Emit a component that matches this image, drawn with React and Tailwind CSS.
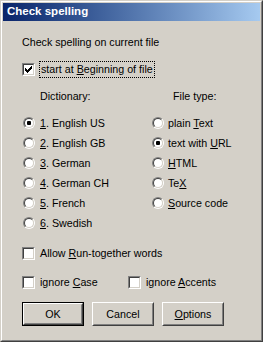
import React from 'react'

function Check({ checked }) {
  return (
    <span className="flex w-[13px] h-[13px] shrink-0 border border-t-[#808080] border-l-[#808080] border-b-white border-r-white">
      <span className="flex-1 flex items-center justify-center bg-white border border-t-[#404040] border-l-[#404040] border-b-[#D4D0C8] border-r-[#D4D0C8]">
        {checked ? (
          <svg width="7" height="7" viewBox="0 0 7 7" shapeRendering="crispEdges">
            <path d="M0 2h1v3h-1z M1 3h1v3h-1z M2 4h1v3h-1z M3 3h1v3h-1z M4 2h1v3h-1z M5 1h1v3h-1z M6 0h1v3h-1z" fill="#000" />
          </svg>
        ) : null}
      </span>
    </span>
  )
}

function Radio({ checked }) {
  return (
    <span className="flex w-3 h-3 shrink-0 rounded-full border border-t-[#808080] border-l-[#808080] border-b-white border-r-white">
      <span className="flex-1 flex items-center justify-center rounded-full bg-white border border-t-[#404040] border-l-[#404040] border-b-[#D4D0C8] border-r-[#D4D0C8]">
        {checked ? <span className="block w-1 h-1 rounded-[1px] bg-black" /> : null}
      </span>
    </span>
  )
}

function Key({ children }) {
  return <span className="underline underline-offset-[1px]">{children}</span>
}

function RadioRow({ checked, gap, children }) {
  return (
    <div className="h-5 flex items-center">
      <span className="ml-px">
        <Radio checked={checked} />
      </span>
      <span className={gap}>{children}</span>
    </div>
  )
}

function Button({ children, isDefault }) {
  return (
    <button type="button" className={`w-[62px] h-6 flex bg-[#D4D0C8] ${isDefault ? 'border border-black' : ''}`}>
      <span className="flex-1 flex border border-t-white border-l-white border-b-[#404040] border-r-[#404040]">
        <span className="flex-1 flex items-center justify-center border border-t-transparent border-l-transparent border-b-[#808080] border-r-[#808080]">
          <span>{children}</span>
        </span>
      </span>
    </button>
  )
}

export default function App() {
  return (
    <div className="w-[263px] h-[342px] bg-[#D4D0C8] border border-t-[#D4D0C8] border-l-[#D4D0C8] border-b-[#404040] border-r-[#404040] font-['Liberation_Sans',Arial,sans-serif] text-[10.7px] text-black leading-none">
      <div className="h-full flex flex-col p-px border border-t-white border-l-white border-b-[#808080] border-r-[#808080]">
        <div className="h-[18px] flex items-center pl-1 bg-gradient-to-r from-[#0A246A] to-[#A6CAF0] text-white font-bold text-[11.5px]">
          Check spelling
        </div>

        <div className="flex flex-col pl-[19px]">
          <div className="mt-[13px] h-4 flex items-center">Check spelling on current file</div>

          <div className="mt-[11px] h-[17px] flex items-center">
            <Check checked />
            <span className="ml-1 block border border-dotted border-black px-px leading-[15px]">
              start at <Key>B</Key>eginning of file
            </span>
          </div>

          <div className="mt-[10px] flex">
            <div className="w-[129px] flex flex-col">
              <div className="h-4 flex items-center pl-[18px]">Dictionary:</div>
              <div className="mt-[9px] flex flex-col">
                <RadioRow gap="ml-[5px]" checked><Key>1</Key>. English US</RadioRow>
                <RadioRow gap="ml-[5px]"><Key>2</Key>. English GB</RadioRow>
                <RadioRow gap="ml-[5px]"><Key>3</Key>. German</RadioRow>
                <RadioRow gap="ml-[5px]"><Key>4</Key>. German CH</RadioRow>
                <RadioRow gap="ml-[5px]"><Key>5</Key>. French</RadioRow>
                <RadioRow gap="ml-[5px]"><Key>6</Key>. Swedish</RadioRow>
              </div>
            </div>
            <div className="flex flex-col">
              <div className="h-4 flex items-center pl-[22px]">File type:</div>
              <div className="mt-[9px] flex flex-col">
                <RadioRow gap="ml-1">plain <Key>T</Key>ext</RadioRow>
                <RadioRow gap="ml-1" checked>text with <Key>U</Key>RL</RadioRow>
                <RadioRow gap="ml-1"><Key>H</Key>TML</RadioRow>
                <RadioRow gap="ml-1">Te<Key>X</Key></RadioRow>
                <RadioRow gap="ml-1"><Key>S</Key>ource code</RadioRow>
              </div>
            </div>
          </div>

          <div className="mt-3 h-4 flex items-center">
            <Check />
            <span className="ml-[5px]">Allow <Key>R</Key>un-together words</span>
          </div>

          <div className="mt-[13px] h-4 flex items-center">
            <div className="w-[106px] flex items-center">
              <Check />
              <span className="ml-[5px]">ignore <Key>C</Key>ase</span>
            </div>
            <div className="flex items-center">
              <Check />
              <span className="ml-[5px]">ignore <Key>A</Key>ccents</span>
            </div>
          </div>

          <div className="mt-3 flex gap-2">
            <Button isDefault>OK</Button>
            <Button>Cancel</Button>
            <Button><Key>O</Key>ptions</Button>
          </div>
        </div>
      </div>
    </div>
  )
}
